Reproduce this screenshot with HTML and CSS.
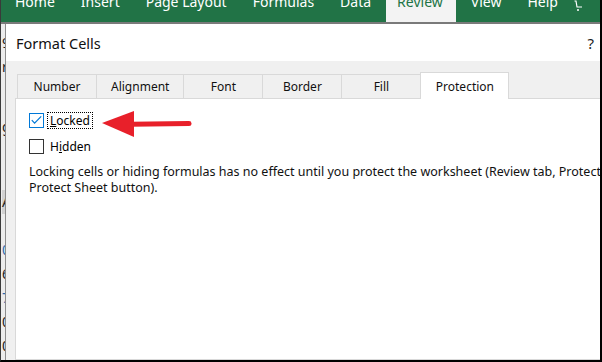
FILE: index.html
```html
<!DOCTYPE html>
<html>
<head>
<meta charset="utf-8">
<link rel="stylesheet" href="styles.css">
</head>
<body>
<div class="frame">
  <div class="ribbon">
    <span class="rtab"><span class="rlabel">Home</span></span>
    <span class="rtab"><span class="rlabel">Insert</span></span>
    <span class="rtab"><span class="rlabel">Page Layout</span></span>
    <span class="rtab"><span class="rlabel">Formulas</span></span>
    <span class="rtab"><span class="rlabel">Data</span></span>
    <span class="rtab active"><span class="rlabel">Review</span></span>
    <span class="rtab"><span class="rlabel">View</span></span>
    <span class="rtab"><span class="rlabel">Help</span></span>
    <svg class="bulb" width="8" height="14" viewBox="0 0 8 14"><path d="M0.5 1 L2 1 L3 7 L8 7" fill="none" stroke="#fff" stroke-width="1.2"/><circle cx="4" cy="10" r="1" fill="#fff"/></svg>
  </div>
  <div class="main">
    <div class="sheet">
      <div class="g">9</div>
      <div class="g">r</div>
      <div class="gap36"></div>
      <div class="g">g</div>
      <div class="gap51"></div>
      <div class="g hdr">A</div>
      <div class="gap24"></div>
      <div class="g blue">0</div>
      <div class="g">6</div>
      <div class="g blue">7</div>
      <div class="g">0</div>
      <div class="g">0</div>
    </div>
    <div class="dialog">
      <div class="titlebar">
        <span class="title">Format Cells</span>
        <span class="help">?</span>
      </div>
      <div class="dbody">
        <div class="tabs">
          <div class="tab">Number</div>
          <div class="tab">Alignment</div>
          <div class="tab">Font</div>
          <div class="tab">Border</div>
          <div class="tab">Fill</div>
          <div class="tab selected">Protection</div>
        </div>
        <div class="panel">
          <div class="check-row">
            <span class="box checked"><svg width="13" height="13" viewBox="0 0 13 13"><path d="M1.8 6.2 L4.6 9.2 L11.2 2.4" fill="none" stroke="#0078d7" stroke-width="1.2"/></svg></span>
            <span class="label focus"><u>L</u>ocked</span>
          </div>
          <div class="check-row">
            <span class="box"></span>
            <span class="label">H<u>i</u>dden</span>
          </div>
          <p class="note">Locking cells or hiding formulas has no effect until you protect the worksheet (Review tab, Protect group,<br>Protect Sheet button).</p>
        </div>
      </div>
    </div>
  </div>
  <svg class="arrow" width="94" height="32" viewBox="0 0 94 32">
    <line x1="30" y1="16.3" x2="88" y2="15.6" stroke="#e8202a" stroke-width="5" stroke-linecap="round"/>
    <polygon points="1,15 33,3 33,29" fill="#e8202a"/>
  </svg>
</div>
</body>
</html>
```

FILE: styles.css
```css
html, body {
  margin: 0;
  padding: 0;
  width: 602px;
  height: 362px;
  overflow: hidden;
  background: #fff;
}

.frame {
  position: relative;
  box-sizing: border-box;
  width: 602px;
  height: 362px;
  border-left: 1px solid #3a3a3a;
  border-right: 2px solid #000;
  border-bottom: 2px solid #000;
  display: flex;
  flex-direction: column;
  font-family: "Noto Sans", "Open Sans", sans-serif;
  color: #000;
  overflow: hidden;
}

/* Ribbon */
.ribbon {
  height: 22px;
  flex: 0 0 22px;
  background: #217346;
  border-bottom: 2px solid #7a7a7a;
  display: flex;
  align-items: flex-start;
  gap: 4px;
  padding-left: 3px;
  overflow: hidden;
}

.rtab {
  height: 22px;
  padding: 0 11px;
  color: #fff;
  font-size: 14px;
  white-space: nowrap;
  overflow: hidden;
}

.rtab.active {
  background: #f3f3f3;
  color: #217346;
  padding-right: 13px;
}

.rlabel {
  display: block;
  line-height: 14px;
  margin-top: -5px;
}

.bulb {
  margin-left: 1px;
  flex: 0 0 auto;
}

/* Main */
.main {
  flex: 1;
  display: flex;
  min-height: 0;
}

.sheet {
  width: 4px;
  flex: 0 0 4px;
  background: #ececec;
  padding-top: 7px;
  padding-left: 1px;
  box-sizing: border-box;
  overflow: hidden;
  font-size: 14px;
  color: #222;
}

.g {
  height: 24px;
  line-height: 24px;
}

.g.hdr {
  background: #d2d2d2;
}

.g.blue {
  color: #2a6ab0;
}

.gap36 { height: 36px; }
.gap51 { height: 51px; }
.gap24 { height: 24px; }

.dialog {
  flex: 1;
  display: flex;
  flex-direction: column;
  border-left: 1px solid #8c8c8c;
  min-width: 0;
}

.titlebar {
  height: 37px;
  flex: 0 0 37px;
  background: #fff;
  display: flex;
  align-items: center;
  justify-content: space-between;
  padding: 0 6px 0 10px;
}

.title {
  font-size: 14.5px;
  color: #111;
}

.help {
  font-size: 15px;
  color: #222;
}

.dbody {
  flex: 1;
  background: #f0f0f0;
  display: flex;
  flex-direction: column;
  padding-top: 11px;
  min-height: 0;
}

.tabs {
  height: 26px;
  display: flex;
  align-items: flex-end;
  margin-left: 11px;
}

.tab {
  box-sizing: border-box;
  height: 24px;
  min-width: 80px;
  padding: 0 14px;
  border: 1px solid #d9d9d9;
  border-bottom: 0;
  margin-left: -1px;
  display: flex;
  align-items: center;
  justify-content: center;
  font-size: 12px;
  color: #111;
  background: #f0f0f0;
}

.tab:first-child {
  margin-left: 0;
}

.tab.selected {
  height: 27px;
  margin-bottom: -1px;
  background: #fff;
  position: relative;
  z-index: 1;
  padding-top: 1px;
  min-width: 89px;
}

.panel {
  flex: 1;
  margin-left: 9px;
  background: #fff;
  border: 1px solid #d9d9d9;
  border-right: 0;
  padding: 13px 0 0 13px;
}

.check-row {
  display: flex;
  align-items: center;
  height: 16px;
  margin-bottom: 10px;
}

.box {
  box-sizing: border-box;
  width: 15px;
  height: 15px;
  border: 1px solid #333;
  background: #fff;
  display: flex;
  align-items: center;
  justify-content: center;
}

.box.checked {
  border-color: #0078d7;
}

.label {
  box-sizing: border-box;
  margin-left: 3px;
  padding: 0 2px;
  font-size: 12px;
  line-height: 15px;
  border: 1px solid transparent;
}

.label.focus {
  border: 1px dotted #000;
}

.note {
  margin: 0;
  font-size: 12.5px;
  line-height: 16px;
  white-space: nowrap;
  color: #111;
}

.arrow {
  position: absolute;
  left: 100px;
  top: 108px;
}
```
